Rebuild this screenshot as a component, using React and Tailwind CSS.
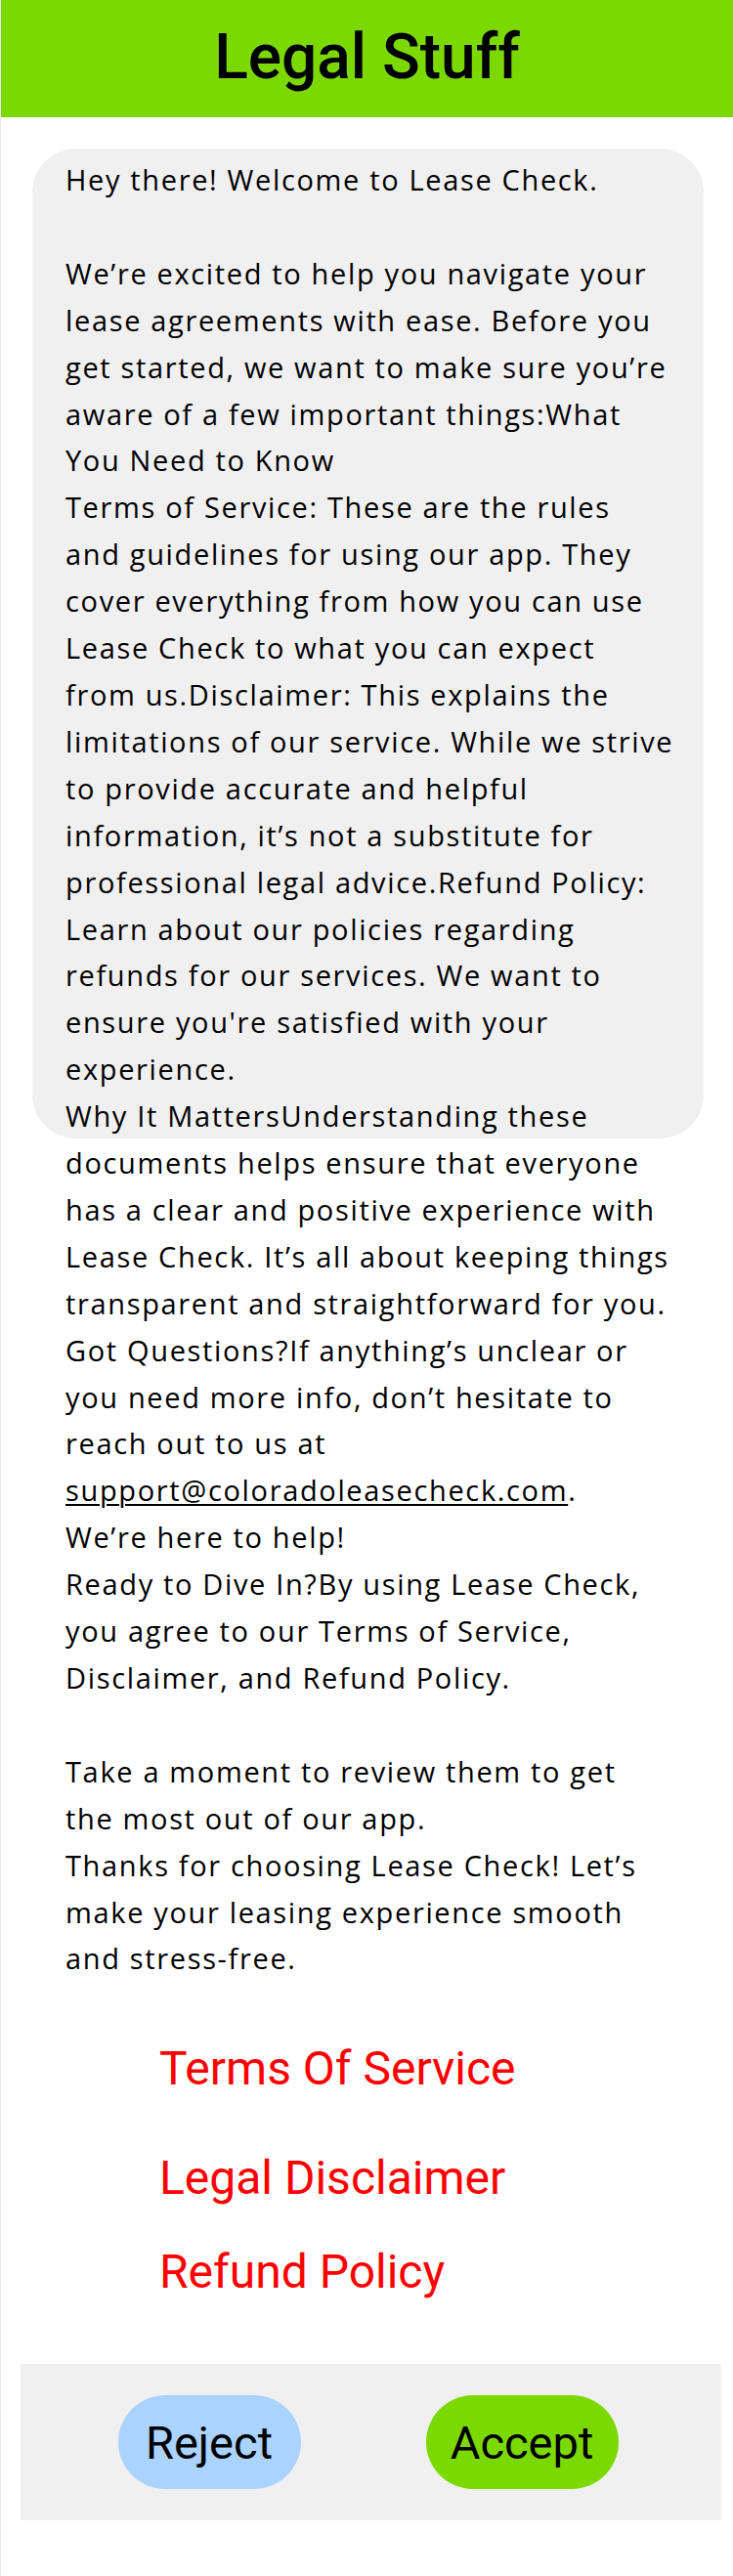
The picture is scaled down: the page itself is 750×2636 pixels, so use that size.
import React from "react";

const body = "font-['Open_Sans','Liberation_Sans',sans-serif]";
const roboto = "font-['Roboto','Liberation_Sans',sans-serif]";

const before = [
  "Hey there! Welcome to Lease Check.",
  "",
  "We’re excited to help you navigate your",
  "lease agreements with ease. Before you",
  "get started, we want to make sure you’re",
  "aware of a few important things:What",
  "You Need to Know",
  "Terms of Service: These are the rules",
  "and guidelines for using our app. They",
  "cover everything from how you can use",
  "Lease Check to what you can expect",
  "from us.Disclaimer: This explains the",
  "limitations of our service. While we strive",
  "to provide accurate and helpful",
  "information, it’s not a substitute for",
  "professional legal advice.Refund Policy:",
  "Learn about our policies regarding",
  "refunds for our services. We want to",
  "ensure you're satisfied with your",
  "experience.",
  "Why It MattersUnderstanding these",
  "documents helps ensure that everyone",
  "has a clear and positive experience with",
  "Lease Check. It’s all about keeping things",
  "transparent and straightforward for you.",
  "Got Questions?If anything’s unclear or",
  "you need more info, don’t hesitate to",
  "reach out to us at",
  "",
].join("\n");

const after = [
  ".",
  "We’re here to help!",
  "Ready to Dive In?By using Lease Check,",
  "you agree to our Terms of Service,",
  "Disclaimer, and Refund Policy.",
  "",
  "Take a moment to review them to get",
  "the most out of our app.",
  "Thanks for choosing Lease Check! Let’s",
  "make your leasing experience smooth",
  "and stress-free.",
].join("\n");

export default function App() {
  return (
    <div className="min-h-[2636px] w-[750px] bg-white border-l border-[#ececec]">
      <header className="h-[120px] bg-[#7cd900] flex items-center justify-center">
        <h1 className={`${roboto} font-medium text-[64px] leading-none text-black pb-[2px]`}>Legal Stuff</h1>
      </header>

      <main className="pt-[32px]">
        <section className="relative">
          <div className="absolute top-0 left-[32px] w-[687px] h-[1013px] rounded-[45px] bg-[#f0f0f0]" />
          <p
            className={`relative ${body} text-[29px] leading-[47.9px] tracking-[1.65px] text-black whitespace-pre pl-[66px] pt-[8px]`}
          >
            {before}
            <span className="underline underline-offset-[3px] decoration-[1.5px]">support@coloradoleasecheck.com</span>
            {after}
          </p>
        </section>

        <nav className={`${roboto} text-[48px] leading-[56px] text-[#ff0000] pl-[162px] pt-[61px] flex flex-col`}>
          <a className="block">Terms Of Service</a>
          <a className="block mt-[56px]">Legal Disclaimer</a>
          <a className="block mt-[40px]">Refund Policy</a>
        </nav>

        <div className="mt-[66px] ml-[20px] w-[717px] h-[160px] bg-[#f0f0f0] flex items-center justify-center gap-[128px] pr-[6px]">
          <button className={`${roboto} h-[96px] w-[187px] rounded-full bg-[#aad3ff] text-[47px] text-black leading-none`}>
            Reject
          </button>
          <button className={`${roboto} h-[96px] w-[197px] rounded-full bg-[#7cd900] text-[47px] text-black leading-none`}>
            Accept
          </button>
        </div>
      </main>
    </div>
  );
}
